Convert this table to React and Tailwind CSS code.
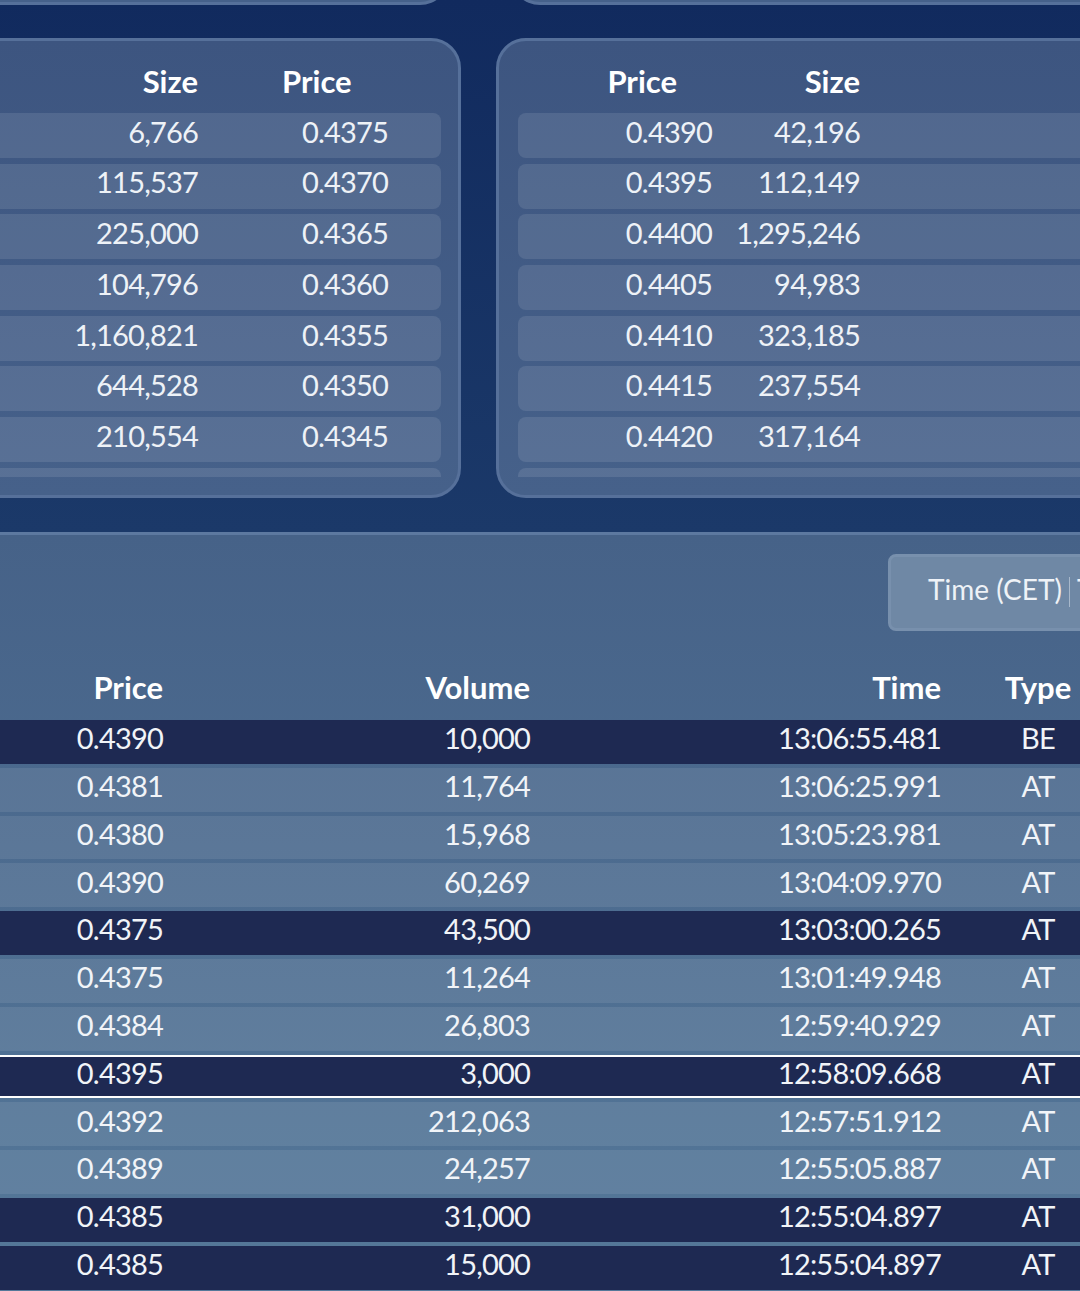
const bids = [
  ['6,766', '0.4375'],
  ['115,537', '0.4370'],
  ['225,000', '0.4365'],
  ['104,796', '0.4360'],
  ['1,160,821', '0.4355'],
  ['644,528', '0.4350'],
  ['210,554', '0.4345'],
  ['70,701', '0.4340'],
]

const asks = [
  ['0.4390', '42,196'],
  ['0.4395', '112,149'],
  ['0.4400', '1,295,246'],
  ['0.4405', '94,983'],
  ['0.4410', '323,185'],
  ['0.4415', '237,554'],
  ['0.4420', '317,164'],
  ['0.4425', '24,771'],
]

const trades = [
  { price: '0.4390', volume: '10,000', time: '13:06:55.481', type: 'BE', dark: true },
  { price: '0.4381', volume: '11,764', time: '13:06:25.991', type: 'AT' },
  { price: '0.4380', volume: '15,968', time: '13:05:23.981', type: 'AT' },
  { price: '0.4390', volume: '60,269', time: '13:04:09.970', type: 'AT' },
  { price: '0.4375', volume: '43,500', time: '13:03:00.265', type: 'AT', dark: true },
  { price: '0.4375', volume: '11,264', time: '13:01:49.948', type: 'AT' },
  { price: '0.4384', volume: '26,803', time: '12:59:40.929', type: 'AT' },
  { price: '0.4395', volume: '3,000', time: '12:58:09.668', type: 'AT', dark: true, selected: true },
  { price: '0.4392', volume: '212,063', time: '12:57:51.912', type: 'AT' },
  { price: '0.4389', volume: '24,257', time: '12:55:05.887', type: 'AT' },
  { price: '0.4385', volume: '31,000', time: '12:55:04.897', type: 'AT', dark: true },
  { price: '0.4385', volume: '15,000', time: '12:55:04.897', type: 'AT', dark: true },
]

const BidPanel = () => (
  <div className="ml-[-40px] w-[501px] h-[460px] shrink-0 rounded-[30px] border-[3px] border-[#56709a] bg-gradient-to-b from-[#3d5580] to-[#46618a] pl-[17px] pr-[17px]">
    <div className="h-[72px] pt-[8px] flex items-center text-[31px] font-bold text-white">
      <div className="w-[218px] shrink-0 text-right">Size</div>
      <div className="pl-[84px] shrink-0">Price</div>
    </div>
    <div className="h-[364px] overflow-hidden flex flex-col gap-[5.7px]">
      {bids.map(([size, price], i) => (
        <div key={i} className="h-[45px] pb-[8px] shrink-0 rounded-[8px] bg-white/[0.1] flex items-center text-[29px] tracking-[-0.8px] text-[#eef2f7]">
          <div className="w-[218px] shrink-0 text-right">{size}</div>
          <div className="pl-[104px] shrink-0">{price}</div>
        </div>
      ))}
    </div>
  </div>
)

const AskPanel = () => (
  <div className="ml-[35px] w-[620px] h-[460px] shrink-0 rounded-[30px] border-[3px] border-[#56709a] bg-gradient-to-b from-[#3d5580] to-[#46618a] pl-[19px]">
    <div className="h-[72px] pt-[8px] flex items-center text-[31px] font-bold text-white">
      <div className="w-[159px] shrink-0 text-right">Price</div>
      <div className="w-[183px] shrink-0 text-right">Size</div>
    </div>
    <div className="h-[364px] overflow-hidden flex flex-col gap-[5.7px]">
      {asks.map(([price, size], i) => (
        <div key={i} className="h-[45px] pb-[8px] shrink-0 rounded-l-[8px] bg-white/[0.1] flex items-center text-[29px] tracking-[-0.8px] text-[#eef2f7]">
          <div className="w-[194px] shrink-0 text-right">{price}</div>
          <div className="w-[148px] shrink-0 text-right">{size}</div>
        </div>
      ))}
    </div>
  </div>
)

const TradeRow = ({ t }) => {
  let cls = 'bg-white/[0.085] pb-[8px]'
  if (t.dark) cls = 'bg-[#1e2952] pb-[8px]'
  if (t.selected) cls = 'bg-[#1e2952] border-y-2 border-white pb-[8px]'
  return (
    <div className={`h-[43.8px] shrink-0 flex items-center text-[29px] tracking-[-0.8px] text-[#f1f4f8] ${cls}`}>
      <div className="w-[163px] shrink-0 text-right">{t.price}</div>
      <div className="w-[367px] shrink-0 text-right">{t.volume}</div>
      <div className="w-[411px] shrink-0 text-right">{t.time}</div>
      <div className="w-[194px] shrink-0 text-center">{t.type}</div>
    </div>
  )
}

export default function App() {
  return (
    <div className="w-[1080px] h-[1291px] overflow-hidden font-['Lato',sans-serif]">
      <div className="h-[532px] bg-gradient-to-b from-[#112a5e] to-[#1b3969] overflow-hidden">
        <div className="flex h-[5px] items-start overflow-hidden">
          <div className="ml-[-40px] w-[490px] h-[40px] mt-[-35px] shrink-0 rounded-b-[30px] border-x-[3px] border-b-[3px] border-[#56709a] bg-[#46618a]" />
          <div className="ml-[60px] w-[620px] h-[40px] mt-[-35px] shrink-0 rounded-b-[30px] border-x-[3px] border-b-[3px] border-[#56709a] bg-[#46618a]" />
        </div>
        <div className="flex mt-[33px]">
          <BidPanel />
          <AskPanel />
        </div>
      </div>

      <div className="h-[759px] border-t-[3px] border-[#5d79a0] bg-gradient-to-b from-[#466288] to-[#557899] overflow-hidden">
        <div className="flex pt-[19px]">
          <div className="ml-[888px] w-[220px] shrink-0 h-[77px] pb-[8px] rounded-[8px] border-[3px] border-[#7890ad] bg-[#6f88a5] flex items-center pl-[37px] text-[28px] text-[#eef2f7] whitespace-nowrap overflow-hidden">
            <span className="shrink-0">Time (CET)</span>
            <span className="shrink-0 ml-[7px] mt-[6px] w-px h-[30px] bg-[#a8b8cb]" />
            <span className="shrink-0 ml-[7px]">Type</span>
          </div>
        </div>
        <div className="h-[89px] pt-[23px] flex items-center text-[31px] font-bold text-white">
          <div className="w-[163px] shrink-0 text-right">Price</div>
          <div className="w-[367px] shrink-0 text-right">Volume</div>
          <div className="w-[411px] shrink-0 text-right">Time</div>
          <div className="w-[194px] shrink-0 text-center">Type</div>
        </div>
        <div className="flex flex-col gap-[4px]">
          {trades.map((t, i) => (
            <TradeRow key={i} t={t} />
          ))}
        </div>
      </div>
    </div>
  )
}
